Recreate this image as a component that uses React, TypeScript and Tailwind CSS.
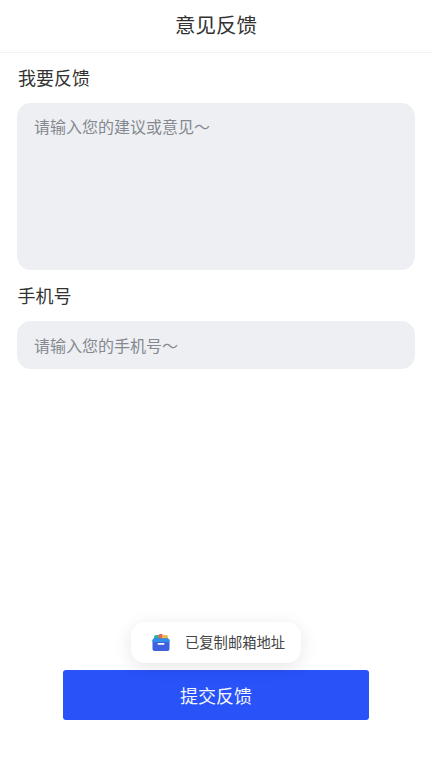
const font = "font-['Noto_Sans_CJK_SC','Noto_Sans',sans-serif]";

function MailIcon() {
	return (
		<svg width="18" height="17" viewBox="0 0 18 17" className="shrink-0">
			<path d="M2 7V3a2 2 0 0 1 2-2h3.5v6z" fill="#2fb5a5" />
			<path d="M6.5 7V1.5A1.5 1.5 0 0 1 8 0h2.5v7z" fill="#e8655a" />
			<path d="M10 7V2.5A1.5 1.5 0 0 1 11.5 1H14a2 2 0 0 1 2 2v4z" fill="#e9b949" />
			<rect x="0.5" y="4.5" width="17" height="12.5" rx="2" fill="#3d5fe0" />
			<path d="M2.5 4.5h13a2 2 0 0 1 2 2V8H.5V6.5a2 2 0 0 1 2-2z" fill="#2f8fe8" />
			<rect x="5.5" y="9" width="7" height="1.7" rx="0.85" fill="#ffffff" />
		</svg>
	);
}

export default function App() {
	return (
		<div className={`${font} relative flex h-[768px] w-[432px] flex-col bg-white`}>
			<header className="flex h-[53px] shrink-0 items-center justify-center border-b border-[#f2f2f2] pb-[4px] text-[20.5px] text-[#333333]">
				意见反馈
			</header>

			<main className="flex flex-1 flex-col px-[17px]">
				<div className="mt-[11px] h-[27px] pl-px text-[18px] leading-[26px] text-[#333333]">我要反馈</div>
				<div className="mt-[12px] h-[167px] rounded-[14px] bg-[#edeff3] px-[18px] pt-[11px] text-[16px] leading-[24px] text-[#85898f]">
					<span className="-ml-px">请输入您的建议或意见～</span>
				</div>
				<div className="mt-[12px] h-[26px] text-[18px] leading-[26px] text-[#333333]">
					<span className="ml-[0.5px]">手机号</span>
				</div>
				<div className="mt-[13px] flex h-[48px] items-center rounded-[14px] bg-[#edeff3] px-[18px] pb-px text-[16px] text-[#85898f]">
					<span className="-ml-px">请输入您的手机号～</span>
				</div>
			</main>

			<div className="flex h-[98px] shrink-0 justify-center">
				<button
					type="button"
					className="h-[50px] w-[306px] rounded-[3px] bg-[#2952f8] text-[18px] text-[#f4f6ff]"
				>
					提交反馈
				</button>
			</div>

			<div className="absolute top-[622px] left-[131px] flex h-[41px] w-[170px] items-center rounded-[14px] bg-white pl-[21px] text-[14.3px] text-[#444444] shadow-[0_4px_18px_rgba(0,0,0,0.1)]">
				<MailIcon />
				<span className="ml-[15px] -mt-px">已复制邮箱地址</span>
			</div>
		</div>
	);
}
